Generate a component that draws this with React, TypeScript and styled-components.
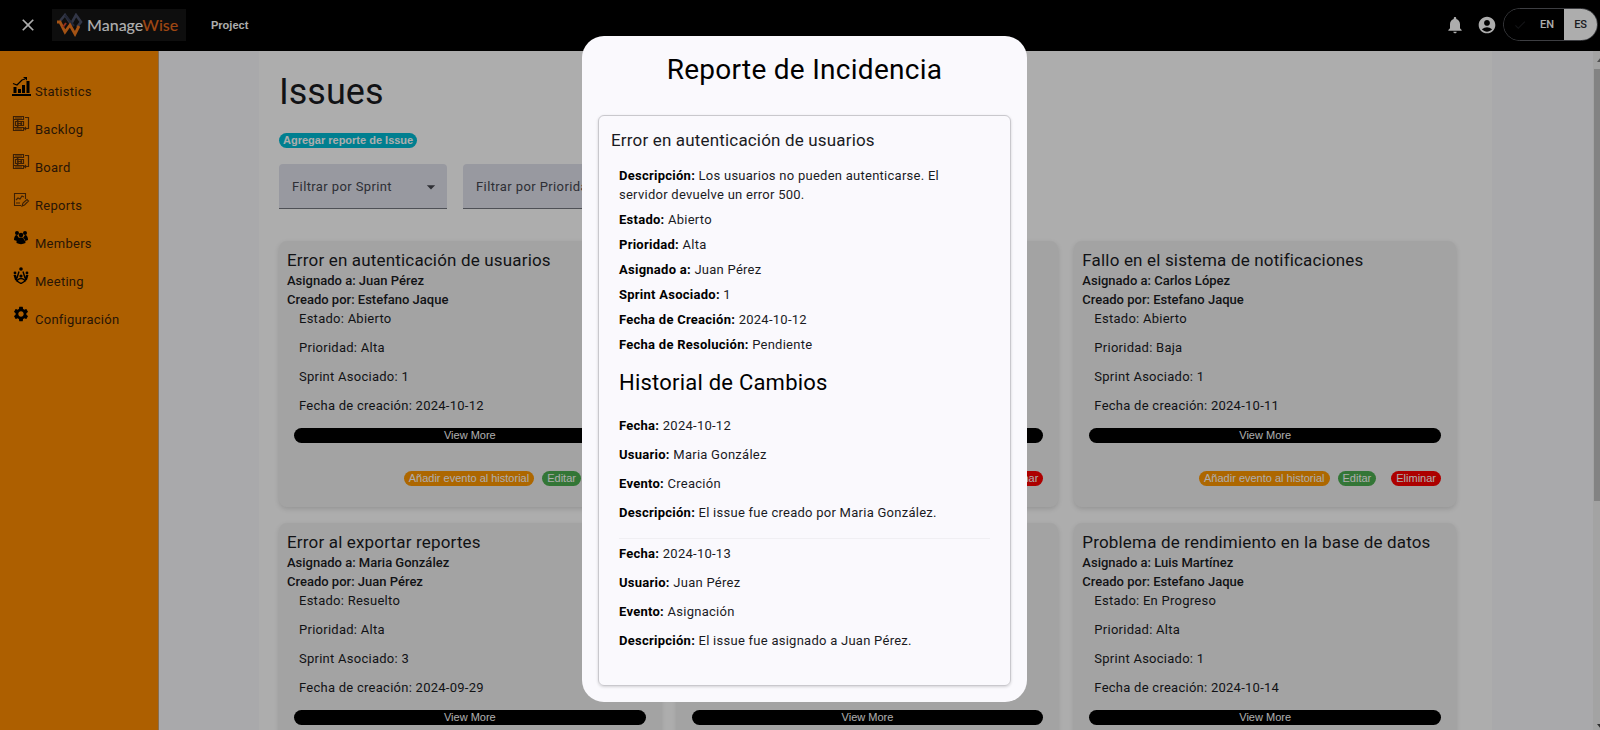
import React from "react";
import styled, { createGlobalStyle } from "styled-components";
import { MdAccountCircle, MdArrowDropDown, MdCheck, MdClose, MdNotifications, MdSettings } from "react-icons/md";

const GlobalStyle = createGlobalStyle`
  *, *::before, *::after { box-sizing: border-box; }
  html, body { margin: 0; height: 100%; overflow: hidden; }
  body { font-family: Roboto, "Liberation Sans", sans-serif; background: #faf9fd; color: #1a1b1f; }
  #root { height: 100%; }
  h1, h2, h3, p, ul { margin: 0; padding: 0; font-weight: 400; }
  button { font-family: "Liberation Sans", Arial, sans-serif; cursor: pointer; border: 0; padding: 0; }
`;

const Shell = styled.div`
  height: 100vh;
  display: flex;
  flex-direction: column;
  overflow: hidden;
`;

const TopBar = styled.header`
  flex: none;
  height: 51px;
  background: #000;
  color: #fff;
  display: flex;
  align-items: center;
  padding: 0 2px 2px 18px;
`;

const IconButton = styled.button`
  display: flex;
  align-items: center;
  justify-content: center;
  width: 20px;
  height: 20px;
  background: none;
  color: inherit;
`;

const Logo = styled.a`
  display: flex;
  align-items: center;
  gap: 4px;
  width: 134px;
  height: 32px;
  margin-left: 14px;
  padding-left: 4px;
  background: #151515;
  color: #fff;
  font-family: Lato, sans-serif;
  font-size: 16px;
  font-weight: 500;
  text-decoration: none;
`;

const LogoAccent = styled.span`
  color: #e8691c;
`;

const ProjectLink = styled.a`
  margin-left: 25px;
  color: #fff;
  font: 700 11px "Liberation Sans", Arial, sans-serif;
  text-decoration: none;
`;

const TopActions = styled.div`
  margin-left: auto;
  display: flex;
  align-items: center;
  gap: 12px;
`;

const LanguageToggle = styled.div`
  display: flex;
  height: 33px;
  width: 95px;
  margin-left: -6px;
  border: 1px solid #5a5c62;
  border-radius: 17px;
  overflow: hidden;
`;

const LanguageButton = styled.button<{ $active?: boolean }>`
  flex: ${(p) => (p.$active ? "none" : "1")};
  width: ${(p) => (p.$active ? "33px" : "auto")};
  display: flex;
  align-items: center;
  justify-content: flex-end;
  gap: 13px;
  padding-right: 10px;
  background: ${(p) => (p.$active ? "#fff" : "#000")};
  color: ${(p) => (p.$active ? "#2a2b30" : "#fff")};
  font: 500 11px Roboto, sans-serif;
`;

const Body = styled.div`
  flex: 1;
  min-height: 0;
  display: flex;
`;

const Sidebar = styled.nav`
  flex: none;
  width: 159px;
  padding: 22px 12px;
  background: #ff8c00;
  border-right: 1px solid #c9a37a;
`;

const NavList = styled.ul`
  list-style: none;
`;

const NavLink = styled.a`
  display: flex;
  align-items: flex-start;
  gap: 4px;
  height: 38px;
  padding-top: 4px;
  color: #3b1f0a;
  font-size: 13px;
  line-height: 30px;
  letter-spacing: 0.02em;
  text-decoration: none;

  svg { flex: none; }
`;

const Scroller = styled.div`
  flex: 1;
  min-width: 0;
  overflow: hidden;
`;

const Content = styled.main`
  margin: 0 101px 0 100px;
  padding: 20px 36px 20px 20px;
  background: #fff;
`;

const PageTitle = styled.h1`
  font-size: 36px;
  line-height: 42px;
`;

const Pill = styled.button<{ $color: string }>`
  display: block;
  height: 15px;
  padding: 0 5px;
  border-radius: 8px;
  background: ${(p) => p.$color};
  color: #fff;
  font-size: 11px;
  line-height: 15px;
  white-space: nowrap;
`;

const AddButton = styled(Pill)`
  margin-top: 20px;
  padding: 0 4px;
  font-weight: 700;
`;

const Filters = styled.div`
  display: flex;
  gap: 16px;
  margin-top: 16px;
`;

const FilterBox = styled.label`
  position: relative;
  display: block;
  width: 168px;
  color: #44464f;

  svg { position: absolute; right: 6px; top: 13px; pointer-events: none; }
`;

const FilterSelect = styled.select`
  appearance: none;
  display: block;
  width: 100%;
  height: 45px;
  padding: 0 13px;
  border: 0;
  border-bottom: 1px solid #74777f;
  border-radius: 4px 4px 0 0;
  background: #e1e2ec;
  color: #44464f;
  font: 13px Roboto, sans-serif;
  letter-spacing: 0.03em;
`;

const CardGrid = styled.section`
  display: grid;
  grid-template-columns: repeat(3, 1fr);
  gap: 16px;
  margin-top: 32px;
`;

const Card = styled.article`
  height: 266px;
  padding: 9px 15px 20px 8px;
  border-radius: 8px;
  background: #f1f1f1;
  box-shadow: 0 2px 5px rgba(0, 0, 0, 0.14);
`;

const CardTitle = styled.h2`
  margin-bottom: 1px;
  font-size: 17px;
  line-height: 20px;
  letter-spacing: 0.01em;
  white-space: nowrap;
`;

const CardMeta = styled.p`
  font-size: 13px;
  font-weight: 500;
  line-height: 19px;
`;

const CardFacts = styled.div`
  padding-left: 12px;
`;

const CardFact = styled.p`
  margin-bottom: 10px;
  font-size: 13px;
  line-height: 19px;
  letter-spacing: 0.02em;
`;

const ViewMore = styled(Pill)`
  width: calc(100% - 7px);
  margin: 13px 0 0 7px;
`;

const CardActions = styled.div`
  display: flex;
  justify-content: flex-end;
  gap: 8px;
  margin-top: 28px;
`;

const DeleteButton = styled(Pill)`
  margin-left: 7px;
`;

const ScrollTrack = styled.div`
  flex: none;
  width: 7px;
  overflow: hidden;
  background: #f1f1f0;
  display: flex;
  flex-direction: column;
`;

const ScrollThumb = styled.div`
  height: 432px;
  margin: 0 0 auto 1px;
  background: #c1c1c1;
`;

const Backdrop = styled.div`
  position: fixed;
  inset: 0;
  display: flex;
  align-items: center;
  justify-content: center;
  padding: 7px 0 0 9px;
  background: rgba(0, 0, 0, 0.32);
`;

const Dialog = styled.div`
  width: 445px;
  padding: 18px 16px 16px;
  border-radius: 22px;
  background: #faf9fd;
`;

const DialogTitle = styled.h2`
  color: #000;
  font-size: 28px;
  line-height: 32px;
  letter-spacing: 0.01em;
  text-align: center;
`;

const Report = styled.section`
  margin-top: 29px;
  padding: 12px 20px 19px;
  border: 1px solid #c9c8cd;
  border-radius: 6px;
  box-shadow: 0 1px 3px rgba(0, 0, 0, 0.16);
`;

const ReportTitle = styled.h3`
  margin: 0 -8px 14px;
  font-size: 17px;
  line-height: 24px;
  letter-spacing: 0.01em;
`;

const Field = styled.p<{ $gap: number }>`
  margin-bottom: ${(p) => p.$gap}px;
  font-size: 13px;
  line-height: 19px;
  letter-spacing: 0.02em;

  strong { color: #000; font-weight: 700; }
`;

const HistoryTitle = styled.h3`
  margin: 15px 0 19px;
  color: #000;
  font-size: 22px;
  line-height: 28px;
  letter-spacing: 0.01em;
`;

const HistoryEvent = styled.div`
  padding-bottom: 6px;

  & + & {
    padding-top: 5px;
    border-top: 1px solid #f0eff3;
  }
`;

const Svg = ({ children, size = 17 }: { children: React.ReactNode; size?: number }) => (
  <svg width={19} height={size} viewBox={`0 0 19 ${size}`} fill="none" aria-hidden="true">{children}</svg>
);

const StatisticsIcon = () => (
  <Svg size={19}>
    <path d="M0 17h19v2H0zM1.500 10h3v6h-3zM6 12h3v4H6zM10 8h3v8h-3zM14.500 4h3v12h-3z" fill="#000" />
    <path d="M1 6.500l4 1.500 5-5 3-1" stroke="#000" strokeWidth="1.300" />
    <path d="M11 0h4v3.500z" fill="#000" />
  </Svg>
);

const BoardIcon = () => (
  <Svg>
    <g stroke="#5a3008" strokeWidth="1.200">
      <path d="M1.500 1.500h10v3h-10zM1.500 12.500h10v3h-10zM3.500 6.500h8v4h-8zM3 3h7M3 14h7M1.500 5v7M5 5l2 2M5 12l2-2M5 8.500h5M13 2.500h3.500v11H13M14 12l-1.500 1.500L14 15" />
      <circle cx="7.500" cy="8.500" r="2" />
    </g>
  </Svg>
);

const ReportsIcon = () => (
  <Svg>
    <g stroke="#5a3008" strokeWidth="1.100">
      <path d="M9 14.500H2.500v-12h11V8M4 9l2-2 2 1 2-3 2 1M4 12h4" />
      <path d="M10 15l1-3 4-3.500 1.500 1.500-4 4z" />
    </g>
  </Svg>
);

const MembersIcon = () => (
  <Svg>
    <g fill="#000">
      <circle cx="5" cy="4" r="2" /><circle cx="13" cy="4" r="2" /><circle cx="9" cy="6" r="2.300" />
      <path d="M2 11c0-3 1-5 3-5l2 3-2 3zM16 11c0-3-1-5-3-5l-2 3 2 3zM4.500 14c0-4 2-5.500 4.500-5.500s4.500 1.500 4.500 5.500c-3 1.500-6 1.500-9 0z" />
    </g>
  </Svg>
);

const MeetingIcon = () => (
  <Svg>
    <g fill="#000">
      <circle cx="9" cy="2" r="1.800" /><circle cx="3" cy="6" r="1.400" /><circle cx="15" cy="6" r="1.400" />
      <path d="M1.500 8h2.500l2.500 6.500L3 13zM16.500 8h-2.500l-2.500 6.500L15 13z" /><circle cx="9" cy="9" r="1.600" />
    </g>
    <path d="M7 4.500L5 11M11 4.500L13 11M4 13.500L9 16.500l5-3M6 13c1-2 5-2 6 0" stroke="#000" strokeWidth="1.400" />
  </Svg>
);

const ConfigIcon = () => (
  <Svg>
    <MdSettings size={18} color="#000" />
  </Svg>
);

const LogoMark = () => (
  <svg width="27" height="24" viewBox="0 0 27 24" fill="none" aria-hidden="true">
    <path d="M4 8l5-6 6 9 5-9 5 7-4 5" stroke="#4a5068" strokeWidth="2.600" />
    <path d="M9 2l9 11" stroke="#343a50" strokeWidth="2" />
    <path d="M1 9h3l5 10 5-7 5 9 4-8" stroke="#f07a1e" strokeWidth="2.800" />
    <path d="M10 10l-3 4" stroke="#d8442a" strokeWidth="2" />
  </svg>
);

const NAV = [
  { label: "Statistics", Icon: StatisticsIcon },
  { label: "Backlog", Icon: BoardIcon },
  { label: "Board", Icon: BoardIcon },
  { label: "Reports", Icon: ReportsIcon },
  { label: "Members", Icon: MembersIcon },
  { label: "Meeting", Icon: MeetingIcon },
  { label: "Configuración", Icon: ConfigIcon },
];

const ISSUES = [
  { title: "Error en autenticación de usuarios", assignee: "Juan Pérez", author: "Estefano Jaque", state: "Abierto", priority: "Alta", sprint: 1, date: "2024-10-12" },
  { title: "Error en la carga de datos", assignee: "Maria González", author: "Juan Pérez", state: "En Progreso", priority: "Media", sprint: 2, date: "2024-10-10" },
  { title: "Fallo en el sistema de notificaciones", assignee: "Carlos López", author: "Estefano Jaque", state: "Abierto", priority: "Baja", sprint: 1, date: "2024-10-11" },
  { title: "Error al exportar reportes", assignee: "Maria González", author: "Juan Pérez", state: "Resuelto", priority: "Alta", sprint: 3, date: "2024-09-29" },
  { title: "Error en la interfaz", assignee: "Carlos López", author: "Juan Pérez", state: "Abierto", priority: "Media", sprint: 2, date: "2024-10-09" },
  { title: "Problema de rendimiento en la base de datos", assignee: "Luis Martínez", author: "Estefano Jaque", state: "En Progreso", priority: "Alta", sprint: 1, date: "2024-10-14" },
];

const DETAILS = [
  ["Descripción:", "Los usuarios no pueden autenticarse. El servidor devuelve un error 500."],
  ["Estado:", "Abierto"],
  ["Prioridad:", "Alta"],
  ["Asignado a:", "Juan Pérez"],
  ["Sprint Asociado:", "1"],
  ["Fecha de Creación:", "2024-10-12"],
  ["Fecha de Resolución:", "Pendiente"],
];

const HISTORY = [
  [["Fecha:", "2024-10-12"], ["Usuario:", "Maria González"], ["Evento:", "Creación"], ["Descripción:", "El issue fue creado por Maria González."]],
  [["Fecha:", "2024-10-13"], ["Usuario:", "Juan Pérez"], ["Evento:", "Asignación"], ["Descripción:", "El issue fue asignado a Juan Pérez."]],
];

const Filter = ({ label }: { label: string }) => (
  <FilterBox>
    <FilterSelect aria-label={label}>
      <option>{label}</option>
    </FilterSelect>
    <MdArrowDropDown size={20} />
  </FilterBox>
);

export default function App() {
  return (
    <>
      <GlobalStyle />
      <Shell>
        <TopBar>
          <IconButton aria-label="Cerrar menú"><MdClose size={20} /></IconButton>
          <Logo href="#"><LogoMark /><span>Manage<LogoAccent>Wise</LogoAccent></span></Logo>
          <ProjectLink href="#">Project</ProjectLink>
          <TopActions>
            <IconButton aria-label="Notificaciones"><MdNotifications size={20} /></IconButton>
            <IconButton aria-label="Cuenta"><MdAccountCircle size={20} /></IconButton>
            <LanguageToggle>
              <LanguageButton><MdCheck size={14} color="#1c1d20" />EN</LanguageButton>
              <LanguageButton $active>ES</LanguageButton>
            </LanguageToggle>
          </TopActions>
        </TopBar>
        <Body>
          <Sidebar>
            <NavList>
              {NAV.map(({ label, Icon }) => (
                <li key={label}><NavLink href="#"><Icon />{label}</NavLink></li>
              ))}
            </NavList>
          </Sidebar>
          <Scroller>
            <Content>
              <PageTitle>Issues</PageTitle>
              <AddButton $color="#00bcd4">Agregar reporte de Issue</AddButton>
              <Filters>
                <Filter label="Filtrar por Sprint" />
                <Filter label="Filtrar por Prioridad" />
              </Filters>
              <CardGrid>
                {ISSUES.map((issue) => (
                  <Card key={issue.title}>
                    <CardTitle>{issue.title}</CardTitle>
                    <CardMeta>Asignado a: {issue.assignee}</CardMeta>
                    <CardMeta>Creado por: {issue.author}</CardMeta>
                    <CardFacts>
                      <CardFact>Estado: {issue.state}</CardFact>
                      <CardFact>Prioridad: {issue.priority}</CardFact>
                      <CardFact>Sprint Asociado: {issue.sprint}</CardFact>
                      <CardFact>Fecha de creación: {issue.date}</CardFact>
                    </CardFacts>
                    <ViewMore $color="#000">View More</ViewMore>
                    <CardActions>
                      <Pill $color="#ff9800">Añadir evento al historial</Pill>
                      <Pill $color="#4caf50">Editar</Pill>
                      <DeleteButton $color="#f00">Eliminar</DeleteButton>
                    </CardActions>
                  </Card>
                ))}
              </CardGrid>
            </Content>
          </Scroller>
          <ScrollTrack aria-hidden="true">
            <svg width="15" height="18" viewBox="0 0 15 18"><path d="M4 11l4-5 4 5z" fill="#777" /></svg>
            <ScrollThumb />
            <svg width="15" height="8" viewBox="0 0 15 8"><path d="M4 2h8l-4 5z" fill="#444" /></svg>
          </ScrollTrack>
        </Body>
      </Shell>
      <Backdrop>
        <Dialog role="dialog" aria-modal="true" aria-labelledby="report-title">
          <DialogTitle id="report-title">Reporte de Incidencia</DialogTitle>
          <Report>
            <ReportTitle>Error en autenticación de usuarios</ReportTitle>
            {DETAILS.map(([name, value]) => (
              <Field key={name} $gap={6}><strong>{name}</strong> {value}</Field>
            ))}
            <HistoryTitle>Historial de Cambios</HistoryTitle>
            {HISTORY.map((event) => (
              <HistoryEvent key={event[0][1]}>
                {event.map(([name, value]) => (
                  <Field key={name} $gap={10}><strong>{name}</strong> {value}</Field>
                ))}
              </HistoryEvent>
            ))}
          </Report>
        </Dialog>
      </Backdrop>
    </>
  );
}
